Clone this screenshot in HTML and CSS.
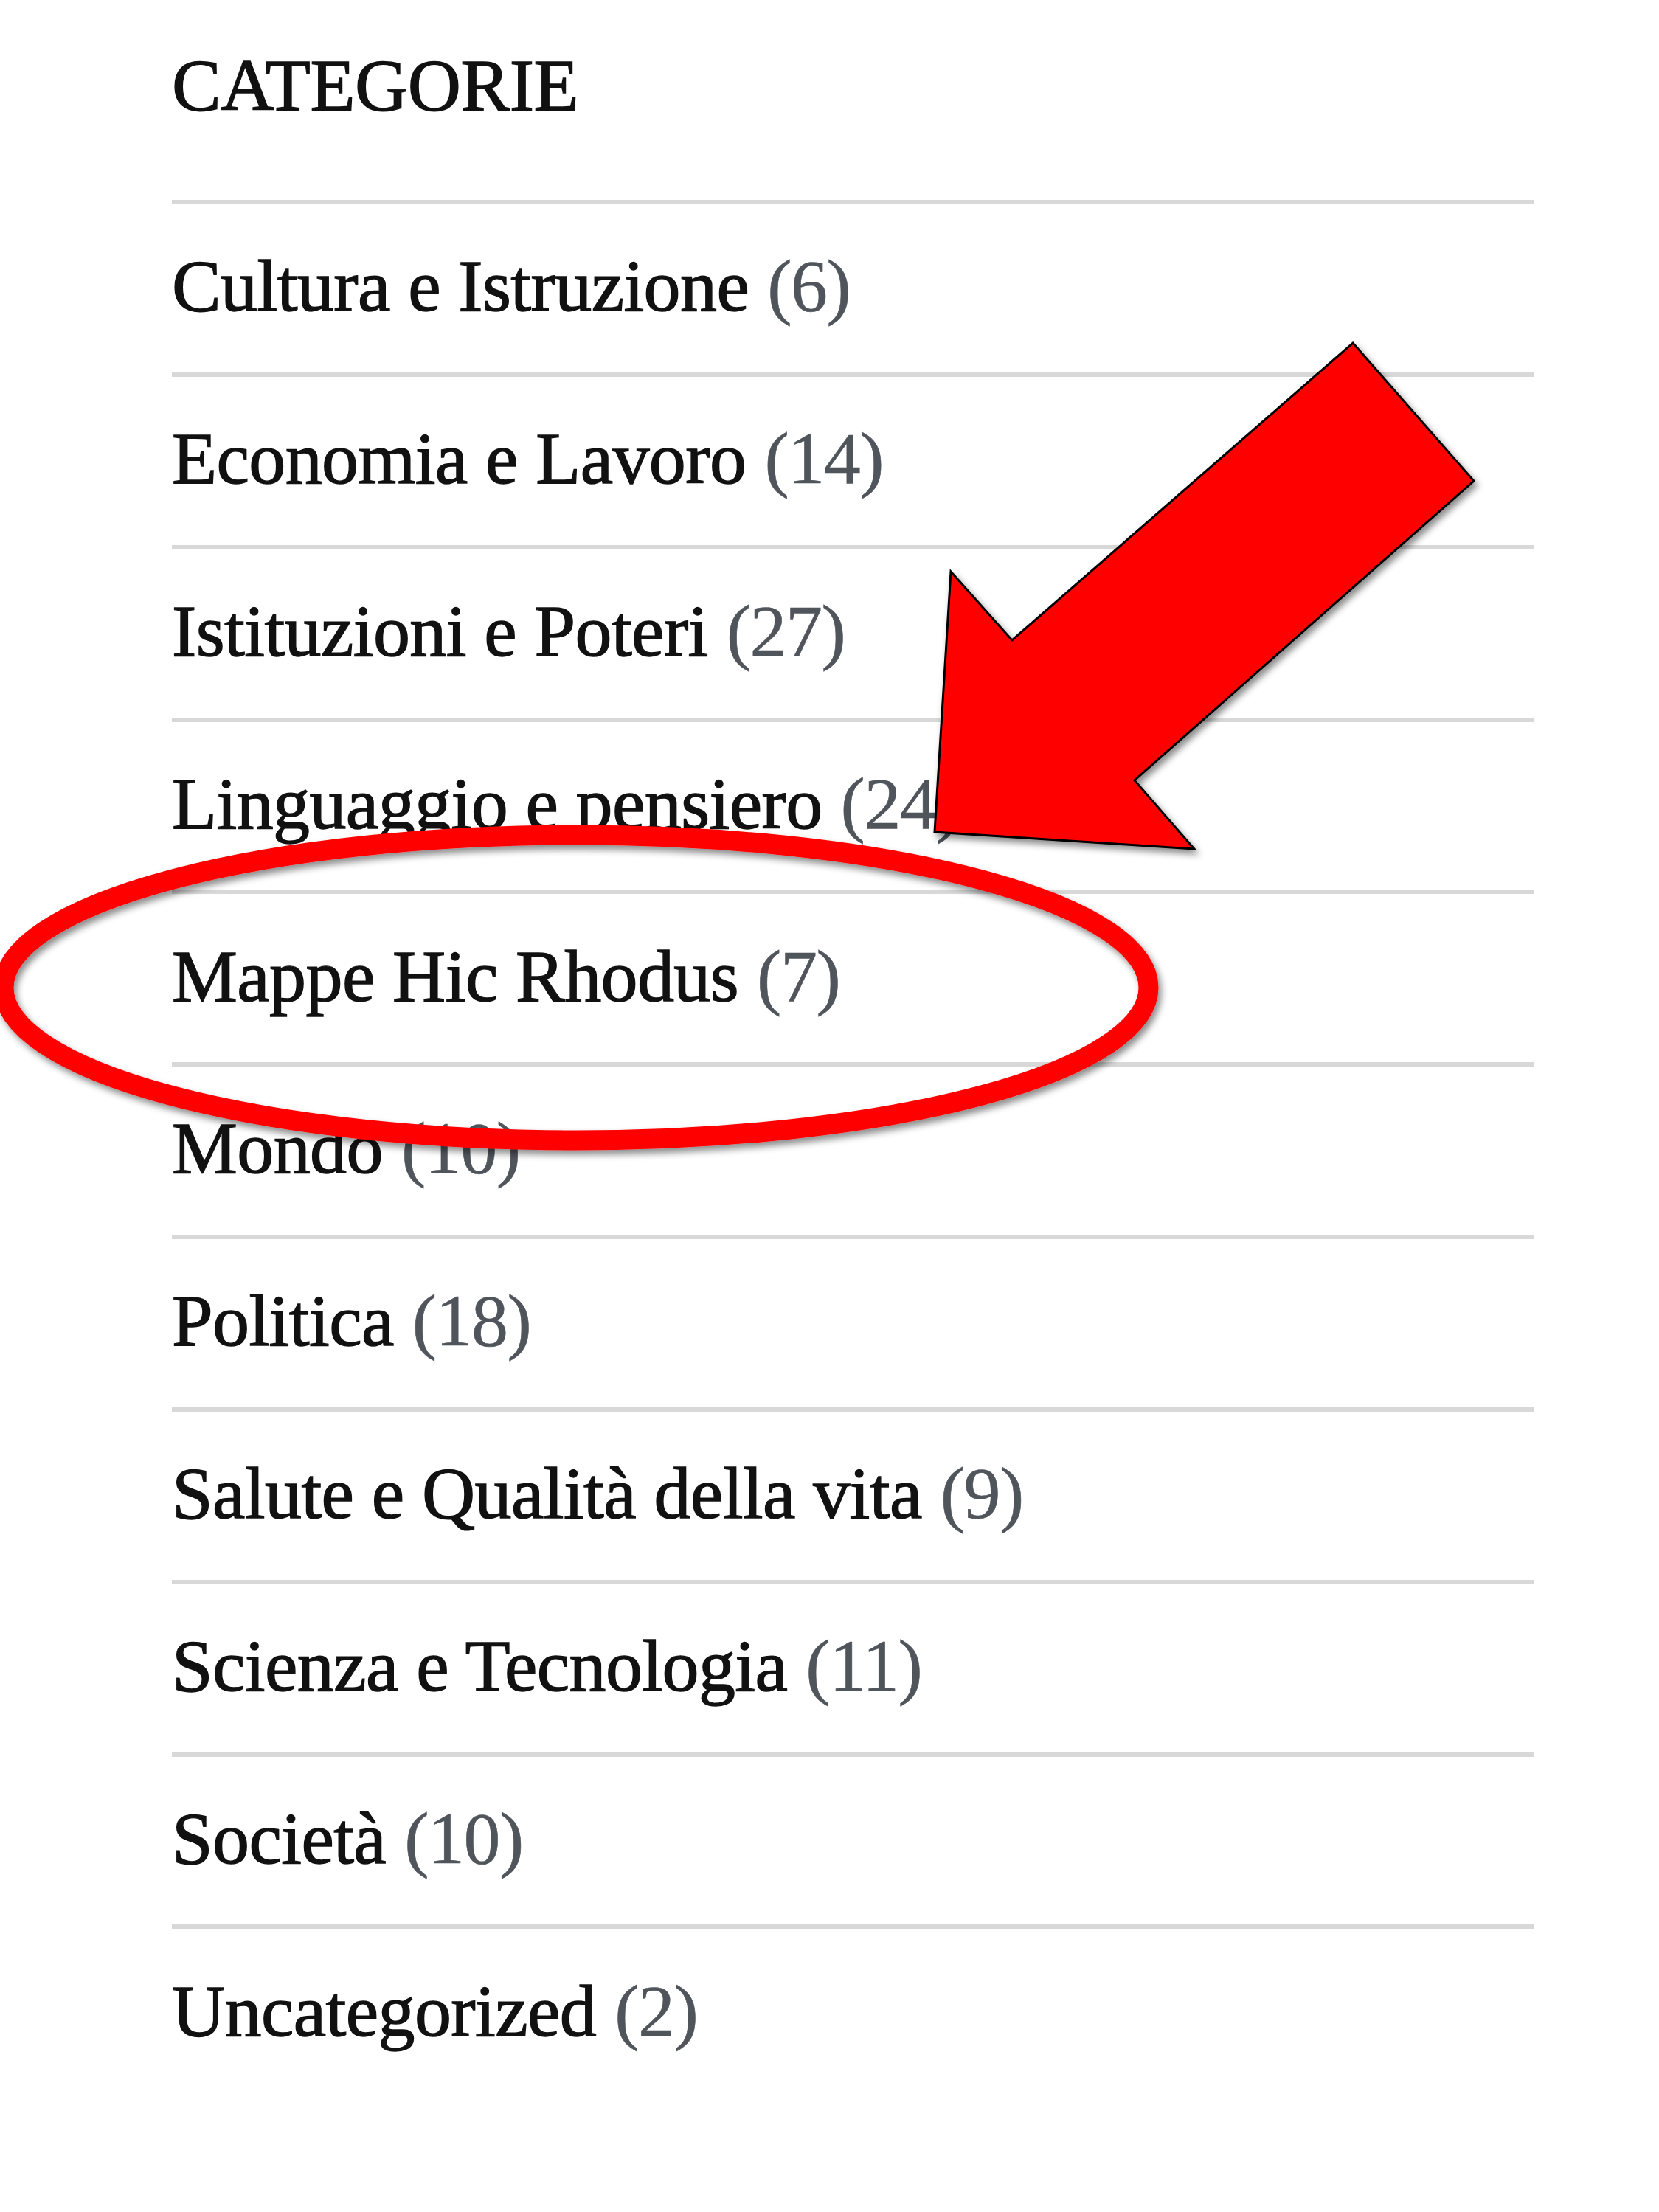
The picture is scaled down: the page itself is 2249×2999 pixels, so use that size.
FILE: index.html
```html
<!DOCTYPE html>
<html lang="it">
<head>
<meta charset="utf-8">
<title>Categorie</title>
<link rel="stylesheet" href="styles.css">
</head>
<body>
<div class="page">
  <aside class="widget">
    <h2 class="widget-title">CATEGORIE</h2>
    <ul class="cat-list">
      <li class="cat-item"><a class="cat-link" href="#">Cultura e Istruzione</a> <span class="count">(6)</span></li>
      <li class="cat-item"><a class="cat-link" href="#">Economia e Lavoro</a> <span class="count">(14)</span></li>
      <li class="cat-item"><a class="cat-link" href="#">Istituzioni e Poteri</a> <span class="count">(27)</span></li>
      <li class="cat-item"><a class="cat-link" href="#">Linguaggio e pensiero</a> <span class="count">(24)</span></li>
      <li class="cat-item"><a class="cat-link" href="#">Mappe Hic Rhodus</a> <span class="count">(7)</span></li>
      <li class="cat-item"><a class="cat-link" href="#">Mondo</a> <span class="count">(10)</span></li>
      <li class="cat-item"><a class="cat-link" href="#">Politica</a> <span class="count">(18)</span></li>
      <li class="cat-item"><a class="cat-link" href="#">Salute e Qualità della vita</a> <span class="count">(9)</span></li>
      <li class="cat-item"><a class="cat-link" href="#">Scienza e Tecnologia</a> <span class="count">(11)</span></li>
      <li class="cat-item"><a class="cat-link" href="#">Società</a> <span class="count">(10)</span></li>
      <li class="cat-item"><a class="cat-link" href="#">Uncategorized</a> <span class="count">(2)</span></li>
    </ul>
  </aside>
  <svg class="annotations" width="2249" height="2999" viewBox="0 0 2249 2999" aria-hidden="true">
    <defs>
      <filter id="shadow" x="-10%" y="-10%" width="120%" height="130%">
        <feDropShadow dx="4" dy="6" stdDeviation="5" flood-color="#000" flood-opacity="0.45"/>
      </filter>
    </defs>
    <polygon points="1834,465 1998,652 1538,1058 1619,1151 1267,1128 1289,775 1372,868" fill="#ff0000" stroke="#000" stroke-width="3" stroke-linejoin="miter" filter="url(#shadow)"/>
    <ellipse cx="781" cy="1339" rx="776" ry="207" fill="none" stroke="#ff0000" stroke-width="27" filter="url(#shadow)"/>
  </svg>
</div>
</body>
</html>
```
FILE: styles.css
```css
html, body {
  margin: 0;
  padding: 0;
  background: #ffffff;
}

.page {
  position: relative;
  width: 2249px;
  height: 2999px;
  overflow: hidden;
}

.widget {
  margin-left: 233px;
  width: 1847px;
  padding-top: 56.25px;
  font-family: "Liberation Serif", "Times New Roman", serif;
}

.widget-title {
  margin: 0;
  font-size: 100px;
  line-height: 120px;
  font-weight: normal;
  letter-spacing: -0.5px;
  color: #111111;
  -webkit-text-stroke: 1.4px #111111;
}

.cat-list {
  list-style: none;
  margin: 94.75px 0 0 0;
  padding: 0;
}

.cat-item {
  border-top: 6px solid #d8d8d8;
  padding-top: 51.25px;
  padding-bottom: 56.6px;
  font-size: 100px;
  line-height: 120px;
  white-space: nowrap;
}

.cat-link {
  color: #111111;
  text-decoration: none;
  letter-spacing: -0.6px;
  -webkit-text-stroke: 1.4px #111111;
}

.count {
  color: #50555c;
  letter-spacing: -1.5px;
  -webkit-text-stroke: 0.6px #50555c;
}

.annotations {
  position: absolute;
  top: 0;
  left: 0;
  pointer-events: none;
}
```
